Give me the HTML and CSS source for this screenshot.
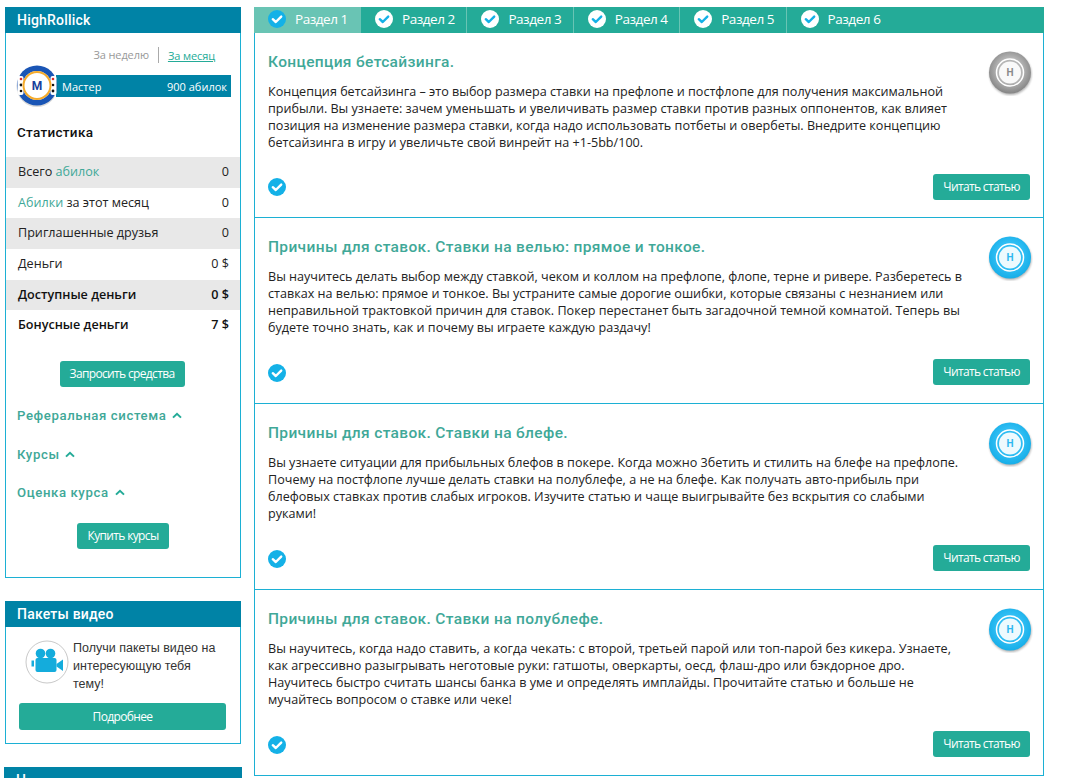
FILE: index.html
```html
<!DOCTYPE html>
<html lang="ru">
<head>
<meta charset="utf-8">
<title>Курс</title>
<link rel="stylesheet" href="styles.css">
</head>
<body>
<svg class="defs" width="0" height="0" aria-hidden="true">
  <defs>
    <symbol id="check" viewBox="0 0 18 18">
      <path d="M4.8 9.2 7.8 12 13.2 6.6" fill="none" stroke-width="2.4" stroke-linecap="round" stroke-linejoin="round" stroke="currentColor"/>
    </symbol>
    <symbol id="chev" viewBox="0 0 10 7">
      <path d="M1 5.6 5 1.8 9 5.6" fill="none" stroke="currentColor" stroke-width="2"/>
    </symbol>
    <radialGradient id="blueMedal" cx="50%" cy="45%" r="55%">
      <stop offset="0.6" stop-color="#2ebdf3"/><stop offset="1" stop-color="#16aee8"/>
    </radialGradient>
    <radialGradient id="greyMedal" cx="50%" cy="45%" r="55%">
      <stop offset="0.55" stop-color="#b5b5b5"/><stop offset="1" stop-color="#858585"/>
    </radialGradient>
    <filter id="medalBlur" x="-20%" y="-20%" width="140%" height="140%"><feGaussianBlur stdDeviation="1"/></filter>
    <symbol id="medal" viewBox="0 0 46 46">
      <circle cx="23.5" cy="24" r="21" fill="#000" opacity=".3" filter="url(#medalBlur)"/>
      <circle cx="23" cy="22.5" r="21"/>
      <circle cx="23" cy="22.5" r="13.5" fill="none" stroke="#fff" stroke-width="1.5"/>
      <circle cx="23" cy="22.5" r="11" fill="#fff" fill-opacity=".92"/>
    </symbol>
  </defs>
</svg>
<div class="page">
  <aside class="side">
    <section class="panel panel-main">
      <h2 class="panel-head">HighRollick</h2>
      <div class="period"><span class="period-a">За неделю</span><a class="period-b">За месяц</a></div>
      <div class="rank">
        <svg class="chip" viewBox="0 0 42 42">
          <circle cx="21" cy="21.5" r="20.5" fill="#000" opacity=".15"/>
          <circle cx="21" cy="20.5" r="20" fill="#1a55b5"/>
          <g fill="#fff">
            <rect x="1.5" y="11" width="6" height="19" rx="2"/>
            <rect x="34.5" y="11" width="6" height="19" rx="2"/>
          </g>
          <g fill="#d92b2b"><circle cx="5" cy="14" r="1.3"/><circle cx="37" cy="14" r="1.3"/></g>
          <g fill="#111"><circle cx="5" cy="20" r="1.4"/><circle cx="37" cy="26" r="1.4"/><circle cx="37" cy="20" r="1.3"/><circle cx="5" cy="26" r="1.3"/></g>
          <circle cx="21" cy="20.5" r="14.5" fill="#fff"/>
          <circle cx="21" cy="20.5" r="13.5" fill="none" stroke="#f5ab2b" stroke-width="2"/>
          <text x="21" y="25" class="chip-m" text-anchor="middle">M</text>
        </svg>
        <div class="rank-bar"><span>Мастер</span><span>900 абилок</span></div>
      </div>
      <h3 class="stat-title">Статистика</h3>
      <ul class="stats">
        <li class="stat alt"><span>Всего <a class="acc">абилок</a></span><span>0</span></li>
        <li class="stat"><span><a class="acc">Абилки</a> за этот месяц</span><span>0</span></li>
        <li class="stat alt"><span>Приглашенные друзья</span><span>0</span></li>
        <li class="stat"><span>Деньги</span><span>0 $</span></li>
        <li class="stat alt strong"><span>Доступные деньги</span><span>0 $</span></li>
        <li class="stat strong"><span>Бонусные деньги</span><span>7 $</span></li>
      </ul>
      <div class="center first-btn"><a class="btn btn-req">Запросить средства</a></div>
      <div class="toggles">
        <div class="toggle">Реферальная система <svg class="chev"><use href="#chev"/></svg></div>
        <div class="toggle">Курсы <svg class="chev"><use href="#chev"/></svg></div>
        <div class="toggle">Оценка курса <svg class="chev"><use href="#chev"/></svg></div>
      </div>
      <div class="center"><a class="btn btn-buy">Купить курсы</a></div>
    </section>
    <section class="panel panel-video">
      <h2 class="panel-head">Пакеты видео</h2>
      <div class="video-row">
        <svg class="cam" viewBox="0 0 44 44">
          <circle cx="22" cy="22" r="21" fill="#fff" stroke="#c9c9c9" stroke-width="1"/>
          <g fill="#14acdc">
            <circle cx="15.5" cy="13.5" r="4.8"/>
            <circle cx="25.5" cy="13.5" r="4.8"/>
            <rect x="10.5" y="18" width="21" height="14" rx="2"/>
            <path d="M31.5 24 38 19.5V31L31.5 26.5Z"/>
            <rect x="6.5" y="20.5" width="2.5" height="6"/>
          </g>
        </svg>
        <p class="video-text">Получи пакеты видео на интересующую тебя тему!</p>
      </div>
      <a class="btn btn-wide">Подробнее</a>
    </section>
    <section class="panel panel-next">
      <h2 class="panel-head">Н</h2>
    </section>
  </aside>
  <main class="main">
    <nav class="tabs">
      <a class="tab tab-on"><span class="tick tick-blue"><svg><use href="#check"/></svg></span>Раздел 1</a>
      <a class="tab"><span class="tick tick-white"><svg><use href="#check"/></svg></span>Раздел 2</a>
      <a class="tab"><span class="tick tick-white"><svg><use href="#check"/></svg></span>Раздел 3</a>
      <a class="tab"><span class="tick tick-white"><svg><use href="#check"/></svg></span>Раздел 4</a>
      <a class="tab"><span class="tick tick-white"><svg><use href="#check"/></svg></span>Раздел 5</a>
      <a class="tab"><span class="tick tick-white"><svg><use href="#check"/></svg></span>Раздел 6</a>
    </nav>
    <article class="card">
      <div class="card-top">
        <div class="card-copy">
          <h2 class="card-title">Концепция бетсайзинга.</h2>
          <p class="card-text">Концепция бетсайзинга – это выбор размера ставки на префлопе и постфлопе для получения максимальной прибыли. Вы узнаете: зачем уменьшать и увеличивать размер ставки против разных оппонентов, как влияет позиция на изменение размера ставки, когда надо использовать потбеты и овербеты. Внедрите концепцию бетсайзинга в игру и увеличьте свой винрейт на +1-5bb/100.</p>
        </div>
        <span class="medal medal-grey"><svg><use href="#medal"/></svg><b>H</b></span>
      </div>
      <div class="card-foot"><span class="tick tick-blue"><svg><use href="#check"/></svg></span><a class="btn btn-read">Читать статью</a></div>
    </article>
    <article class="card">
      <div class="card-top">
        <div class="card-copy">
          <h2 class="card-title">Причины для ставок. Ставки на велью: прямое и тонкое.</h2>
          <p class="card-text">Вы научитесь делать выбор между ставкой, чеком и коллом на префлопе, флопе, терне и ривере. Разберетесь в ставках на велью: прямое и тонкое. Вы устраните самые дорогие ошибки, которые связаны с незнанием или неправильной трактовкой причин для ставок. Покер перестанет быть загадочной темной комнатой. Теперь вы будете точно знать, как и почему вы играете каждую раздачу!</p>
        </div>
        <span class="medal medal-blue"><svg><use href="#medal"/></svg><b>H</b></span>
      </div>
      <div class="card-foot"><span class="tick tick-blue"><svg><use href="#check"/></svg></span><a class="btn btn-read">Читать статью</a></div>
    </article>
    <article class="card">
      <div class="card-top">
        <div class="card-copy">
          <h2 class="card-title">Причины для ставок. Ставки на блефе.</h2>
          <p class="card-text">Вы узнаете ситуации для прибыльных блефов в покере. Когда можно 3бетить и стилить на блефе на префлопе. Почему на постфлопе лучше делать ставки на полублефе, а не на блефе. Как получать авто-прибыль при блефовых ставках против слабых игроков. Изучите статью и чаще выигрывайте без вскрытия со слабыми руками!</p>
        </div>
        <span class="medal medal-blue"><svg><use href="#medal"/></svg><b>H</b></span>
      </div>
      <div class="card-foot"><span class="tick tick-blue"><svg><use href="#check"/></svg></span><a class="btn btn-read">Читать статью</a></div>
    </article>
    <article class="card">
      <div class="card-top">
        <div class="card-copy">
          <h2 class="card-title">Причины для ставок. Ставки на полублефе.</h2>
          <p class="card-text">Вы научитесь, когда надо ставить, а когда чекать: с второй, третьей парой или топ-парой без кикера. Узнаете, как агрессивно разыгрывать неготовые руки: гатшоты, оверкарты, оесд, флаш-дро или бэкдорное дро. Научитесь быстро считать шансы банка в уме и определять имплайды. Прочитайте статью и больше не мучайтесь вопросом о ставке или чеке!</p>
        </div>
        <span class="medal medal-blue"><svg><use href="#medal"/></svg><b>H</b></span>
      </div>
      <div class="card-foot"><span class="tick tick-blue"><svg><use href="#check"/></svg></span><a class="btn btn-read">Читать статью</a></div>
    </article>
  </main>
</div>
</body>
</html>
```
FILE: styles.css
```css
* { box-sizing: border-box; }
html, body { margin: 0; padding: 0; height: 778px; overflow: hidden; background: #fff; }
body { font-family: "Open Sans", sans-serif; font-size: 12.6px; color: #222; }
h2, h3, p, ul { margin: 0; padding: 0; }
.defs { position: absolute; }

.page { display: flex; gap: 13px; padding: 7px 0 0 5px; align-items: flex-start; }
.side { width: 236px; flex: none; display: flex; flex-direction: column; gap: 23px; }
.main { width: 790px; flex: none; }

.panel { border: 1px solid #1cb0d4; border-top: 0; }
.panel-head { height: 26px; margin: 0 -1px; padding-left: 12px; background: #0083a6; color: #fff; font: 500 14px/26px Roboto, sans-serif; letter-spacing: .2px; }
.panel-main { height: 571px; }
.panel-video { height: 143px; }
.panel-next { border: 0; }

.period { display: flex; justify-content: flex-end; align-items: center; height: 16px; margin-top: 14px; padding-right: 25px; font-size: 11px; letter-spacing: -.1px; }
.period-a { color: #999; padding-right: 9px; border-right: 1px solid #aaa; line-height: 16px; }
.period-b { color: #24ab98; padding-left: 9px; text-decoration: underline; }

.rank { display: flex; align-items: center; height: 42px; margin: 2px 9px 0 10px; position: relative; }
.chip { width: 42px; height: 42px; flex: none; position: relative; z-index: 1; }
.chip-m { font: 700 12px Roboto, sans-serif; fill: #1a3f9c; }
.rank-bar { flex: 1; height: 22px; margin: 0 0 0 -2px; padding: 0 4px 0 6px; background: #0083a6; color: #fff; display: flex; justify-content: space-between; align-items: center; font-size: 11px; }

.stat-title { margin: 16px 0 16px 11px; font: 500 13.5px/18px Roboto, sans-serif; letter-spacing: .3px; color: #111; }
.stats { list-style: none; }
.stat { height: 30.7px; display: flex; justify-content: space-between; align-items: center; padding: 0 11px 2px 12px; }
.stat.alt { background: #e8e8e8; }
.stat.strong { font-weight: 600; color: #111; }
.acc { color: #3fa898; }

.center { display: flex; justify-content: center; }
.first-btn { margin-top: 20px; padding-right: 2px; }
.btn { background: #24ab98; color: #fff; border-radius: 3px; text-align: center; display: block; font-size: 12px; letter-spacing: -.65px; height: 26px; line-height: 26px; }
.btn-req { width: 125px; }
.btn-buy { width: 92px; }
.btn-wide { height: 27px; line-height: 27px; width: 207px; margin: 0 0 0 13px; }
.btn-read { width: 97px; }

.toggles { padding-left: 11px; margin: 20px 0 21px; display: flex; flex-direction: column; gap: 20.5px; }
.toggle { font: 500 13.2px/18px Roboto, sans-serif; letter-spacing: .6px; color: #3fa898; }
.chev { width: 10px; height: 7px; margin-left: 2px; color: #24ab98; vertical-align: 1px; }

.video-row { display: flex; gap: 4px; padding: 13px 0 0 19px; height: 76px; }
.cam { width: 44px; height: 44px; flex: none; }
.video-text { width: 146px; font: 400 12.5px/18px "Liberation Sans", Arial, sans-serif; color: #333; margin-top: -1px; }

.tabs { display: flex; height: 26px; background: #24ab98; }
.tab { width: 106.4px; height: 26px; border-right: 1px solid #69c4b4; color: #fff; display: flex; align-items: center; padding: 0 0 2px 14px; font-size: 13.5px; letter-spacing: -.45px; gap: 9px; }
.tab:last-child { border-right: 0; }
.tab-on { width: 107px; background: #69c4b4; }

.tick { width: 18px; height: 18px; border-radius: 50%; flex: none; display: block; }
.tick svg { width: 18px; height: 18px; display: block; }
.tick-blue { background: #14b1e7; color: #fff; }
.tick-white { background: #fff; color: #14b1e7; }

.card { height: 186px; border: 1px solid #1cb0d4; border-top: 0; padding: 0 13px 0 13px; display: flex; flex-direction: column; }
.card:nth-child(2) { height: 185px; }
.card-top { display: flex; justify-content: space-between; padding-top: 19px; flex: 1; }
.card-copy { width: 696px; }
.card-title { font: 500 15.5px/20px Roboto, sans-serif; letter-spacing: .35px; color: #3fa898; }
.card-text { margin-top: 11px; font-size: 12.6px; line-height: 17px; color: #222; }
.medal { width: 46px; height: 46px; flex: none; position: relative; margin: -2px -3px 0 0; display: block; }
.medal svg { width: 46px; height: 46px; display: block; }
.medal b { position: absolute; inset: 0 0 1px; display: flex; align-items: center; justify-content: center; font: 700 10px Roboto, sans-serif; }
.medal-blue svg { fill: url(#blueMedal); }
.medal-blue b { color: #2eb8f0; }
.medal-grey svg { fill: url(#greyMedal); }
.medal-grey b { color: #8a8a8a; }
.medal-grey svg use { opacity: 1; }
.card-foot { display: flex; justify-content: space-between; align-items: center; height: 26px; margin-bottom: 17px; }
.card:not(:nth-child(2)) .btn-read { margin-top: -2px; }
```
